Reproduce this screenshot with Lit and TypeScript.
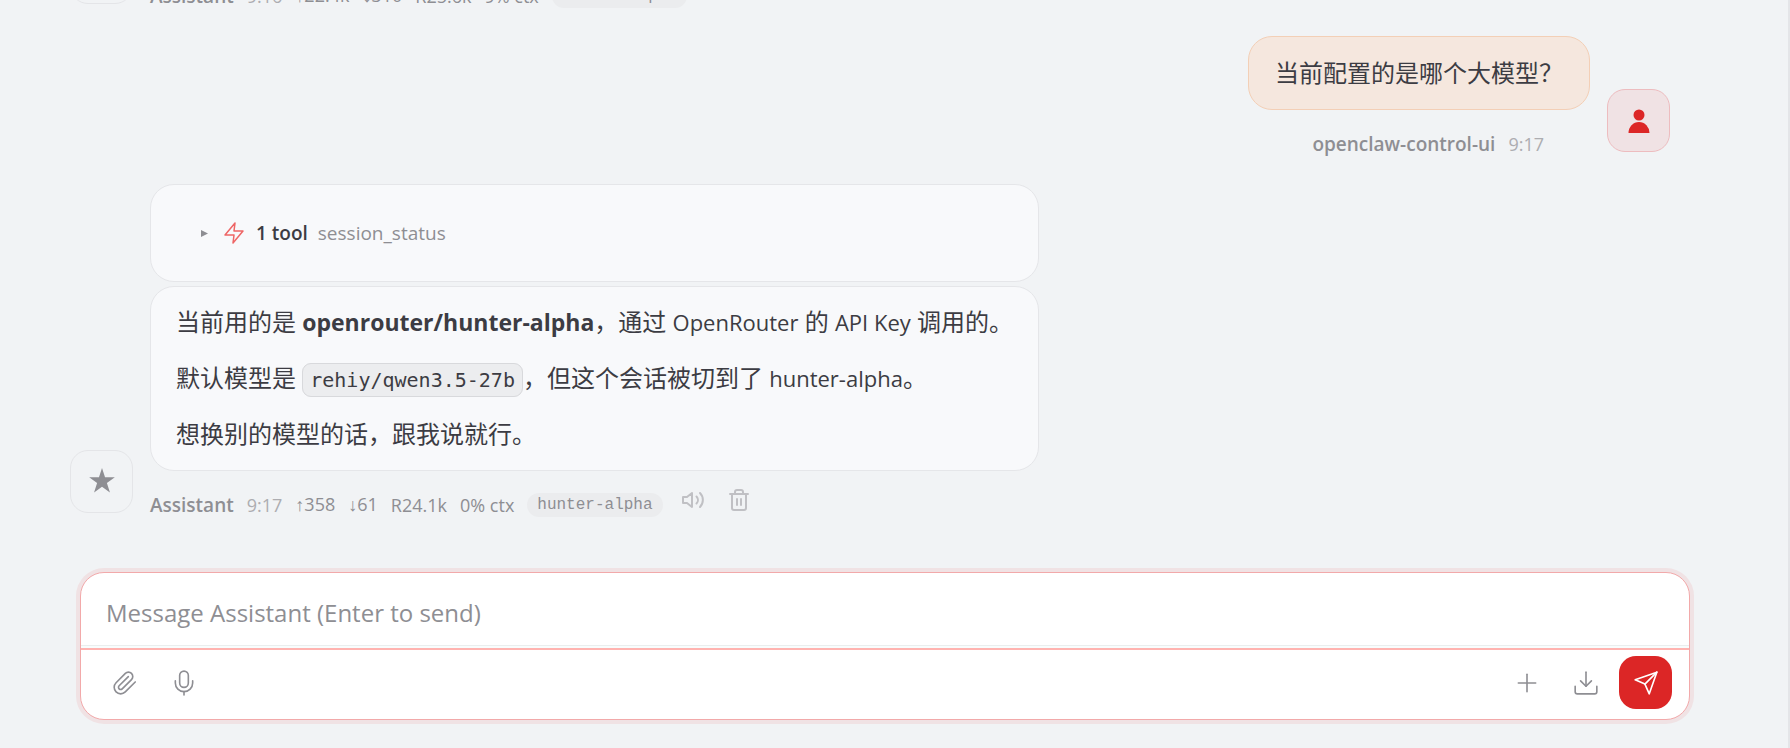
import { LitElement, html, css, svg } from "lit";
import { customElement, property } from "lit/decorators.js";

const icons = {
  bolt: svg`<polygon points="13 2 3 14 12 14 11 22 21 10 12 10 13 2"></polygon>`,
  speaker: svg`<polygon points="11 5 6 9 2 9 2 15 6 15 11 19 11 5"></polygon><path d="M15.5 8.5a5 5 0 0 1 0 7"></path><path d="M19 5a10 10 0 0 1 0 14"></path>`,
  trash: svg`<path d="M3 6h18"></path><path d="M19 6v14a2 2 0 0 1-2 2H7a2 2 0 0 1-2-2V6"></path><path d="M8 6V4a2 2 0 0 1 2-2h4a2 2 0 0 1 2 2v2"></path><path d="M10 11v6"></path><path d="M14 11v6"></path>`,
  clip: svg`<path d="m21.44 11.05-9.19 9.19a6 6 0 0 1-8.49-8.49l8.57-8.57A4 4 0 1 1 18 8.84l-8.59 8.57a2 2 0 0 1-2.83-2.83l8.49-8.48"></path>`,
  mic: svg`<path d="M12 1a4 4 0 0 0-4 4v7a4 4 0 0 0 8 0V5a4 4 0 0 0-4-4Z"></path><path d="M20 10v2a8 8 0 0 1-16 0v-2"></path><path d="M12 20v3"></path>`,
  plus: svg`<path d="M4 12h16"></path><path d="M12 4v16"></path>`,
  download: svg`<path d="M22 15v5a2 2 0 0 1-2 2H4a2 2 0 0 1-2-2v-5"></path><path d="m7 10 5 5 5-5"></path><path d="M12 15V2"></path>`,
  send: svg`<path d="m22 2-7 20-4-9-9-4Z"></path><path d="M22 2 11 13"></path>`,
};

const icon = (name: keyof typeof icons) =>
  html`<svg class="icon" viewBox="0 0 24 24" aria-hidden="true">${icons[name]}</svg>`;

const shared = css`
  * { box-sizing: border-box; }
  p { margin: 0; }
  button { border: 0; padding: 0; background: none; font: inherit; color: inherit; cursor: pointer; }
  .icon {
    display: block; width: 24px; height: 24px; fill: none; stroke: currentColor;
    stroke-width: 1.5; stroke-linecap: round; stroke-linejoin: round;
  }
`;

@customElement("message-meta")
class MessageMeta extends LitElement {
  @property() who = "";
  @property() time = "";
  @property({ type: Array }) stats: string[] = [];
  @property() model = "";
  @property({ type: Boolean }) actions = false;

  static styles = [shared, css`
    :host { display: flex; align-items: flex-end; min-height: 36px; margin-top: 11px; color: #8e8e93; font-size: 18px; line-height: 26px; white-space: nowrap; }
    .row { display: flex; align-items: center; gap: 13px; }
    .who { font-size: 19px; font-weight: 600; }
    .time { color: #adadb1; }
    .arrow { font-family: "Liberation Sans", sans-serif; }
    .model { padding: 0 10px; border-radius: 12px; background: #ebecee; font: 16px/24px "Liberation Mono", monospace; }
    .actions { display: flex; gap: 10px; margin-left: 12px; color: #c0c0c4; }
    .actions button { display: grid; place-items: center; width: 36px; height: 36px; }
    .actions .icon { stroke-width: 2; }
  `];

  private stat(text: string) {
    return /^[↑↓]/.test(text)
      ? html`<span><span class="arrow">${text[0]}</span>${text.slice(1)}</span>`
      : html`<span>${text}</span>`;
  }

  render() {
    return html`
      <div class="row">
        <span class="who">${this.who}</span>
        <time class="time">${this.time}</time>
        ${this.stats.map((s) => this.stat(s))}
        ${this.model ? html`<span class="model">${this.model}</span>` : null}
      </div>
      ${this.actions
        ? html`<div class="actions">
            <button aria-label="Read aloud">${icon("speaker")}</button>
            <button aria-label="Delete">${icon("trash")}</button>
          </div>`
        : null}
    `;
  }
}

@customElement("chat-composer")
class ChatComposer extends LitElement {
  static styles = [shared, css`
    :host { display: block; border: 1px solid #f2a9aa; border-radius: 24px; background: #fff; box-shadow: 0 0 0 4px #f0e2e4; overflow: hidden; color: #8e8e93; }
    textarea { display: block; width: 100%; height: 72px; padding: 22px 25px 14px; border: 0; outline: 0; resize: none; background: none; color: #3c3c43; font: 24px/36px "Open Sans", "Noto Sans CJK SC", sans-serif; }
    textarea::placeholder { color: #8e8e93; opacity: 1; }
    .rule { height: 5px; border-top: 1px solid #ebeeee; border-bottom: 2px solid #ffb3b0; background: #f8fdfd; }
    .tools { display: flex; align-items: center; gap: 7px; padding: 6px 17px 10px 18px; }
    .tools button { display: grid; place-items: center; width: 52px; height: 53px; }
    .tools .icon { width: 26px; height: 26px; }
    .fill { flex: 1; }
    .tools .send { width: 53px; border-radius: 17px; background: #dc2626; color: #fff; }
  `];

  render() {
    return html`
      <textarea rows="1" aria-label="Message" placeholder="Message Assistant (Enter to send)"></textarea>
      <div class="rule"></div>
      <div class="tools">
        <button aria-label="Attach file">${icon("clip")}</button>
        <button aria-label="Voice input">${icon("mic")}</button>
        <span class="fill"></span>
        <button aria-label="New session">${icon("plus")}</button>
        <button aria-label="Export">${icon("download")}</button>
        <button class="send" aria-label="Send">${icon("send")}</button>
      </div>
    `;
  }
}

@customElement("app-root")
class AppRoot extends LitElement {
  static styles = [shared, css`
    :host {
      display: flex; flex-direction: column; height: 100vh; overflow: hidden;
      border-right: 2px solid #e4e5e8; background: #f1f3f5; color: #3c3c43;
      font-family: "Open Sans", "Noto Sans CJK SC", sans-serif; box-sizing: border-box;
    }
    .thread { flex: 1; min-height: 0; overflow: hidden; display: flex; flex-direction: column; justify-content: flex-end; gap: 27px; padding: 0 118px 54px 70px; }
    .group { display: flex; align-items: flex-end; gap: 17px; flex: none; }
    .group.user { flex-direction: row-reverse; }
    .avatar { display: grid; place-items: center; flex: none; width: 63px; height: 63px; margin-bottom: 5px; border: 1px solid #e4e5e8; border-radius: 18px; color: #8e8e93; }
    .avatar svg { width: 28px; height: 28px; fill: currentColor; }
    .user .avatar { border-color: #edbcbf; background: #f0e2e4; color: #dc2626; }
    .stack { display: flex; flex-direction: column; gap: 4px; }
    .bubble { padding: 17px 25px 18px; border: 1px solid #e5e6e9; border-radius: 24px; background: #f8f9fb; font-size: 24px; line-height: 36px; }
    .bubble p + p { margin-top: 20px; }
    .user .bubble { padding: 18px 26px; border-color: #f3cfb6; background: #f5e7de; }
    .user message-meta { padding-right: 46px; justify-content: flex-end; }
    .latin { font-size: 22px; }
    strong { font-size: 23px; font-weight: 700; }
    code { padding: 4px 7px; border: 1px solid #d8d9dc; border-radius: 9px; background: #ecedef; font: 20px/24px "DejaVu Sans Mono", monospace; }
    summary { display: flex; align-items: center; gap: 10px; padding: 13px 25px 12px; list-style: none; font-size: 19px; }
    summary .icon { color: #e66; }
    .marker { width: 7px; height: 7px; fill: #8e8e93; margin-right: 4px; }
    .count { font-weight: 600; }
    .name { color: #8e8e93; }
    chat-composer { flex: none; margin: 0 98px 28px 80px; }
  `];

  render() {
    const star = html`<div class="avatar"><svg viewBox="0 0 24 24" aria-hidden="true"><path d="M12 0l2.6 8h8.4l-6.8 4.9 2.6 8-6.8-4.9-6.8 4.9 2.6-8L1 8h8.4z"></path></svg></div>`;
    return html`
      <main class="thread">
        <div class="group">
          ${star}
          <div class="stack">
            <message-meta who="Assistant" time="9:16" .stats=${["↑22.4k", "↓310", "R25.6k", "9% ctx"]} model="hunter-alpha"></message-meta>
          </div>
        </div>
        <div class="group user">
          <div class="avatar"><svg viewBox="0 0 28 28" aria-hidden="true"><circle cx="14" cy="8" r="5.5"></circle><path d="M3.5 26a10.5 11 0 0 1 21 0z"></path></svg></div>
          <div>
            <div class="bubble"><p>当前配置的是哪个大模型？</p></div>
            <message-meta who="openclaw-control-ui" time="9:17"></message-meta>
          </div>
        </div>
        <div class="group">
          ${star}
          <div>
            <div class="stack">
              <details class="bubble">
                <summary>
                  <svg class="marker" viewBox="0 0 7 7" aria-hidden="true"><path d="M0 0l7 3.5L0 7z"></path></svg>
                  ${icon("bolt")}
                  <span class="count">1 tool</span>
                  <span class="name">session_status</span>
                </summary>
              </details>
              <div class="bubble">
                <p>当前用的是 <strong>openrouter/hunter-alpha</strong>，通过 <span class="latin">OpenRouter</span> 的 <span class="latin">API Key</span> 调用的。</p>
                <p>默认模型是 <code>rehiy/qwen3.5-27b</code>，但这个会话被切到了 <span class="latin">hunter-alpha</span>。</p>
                <p>想换别的模型的话，跟我说就行。</p>
              </div>
            </div>
            <message-meta who="Assistant" time="9:17" .stats=${["↑358", "↓61", "R24.1k", "0% ctx"]} model="hunter-alpha" actions></message-meta>
          </div>
        </div>
      </main>
      <chat-composer></chat-composer>
    `;
  }
}
